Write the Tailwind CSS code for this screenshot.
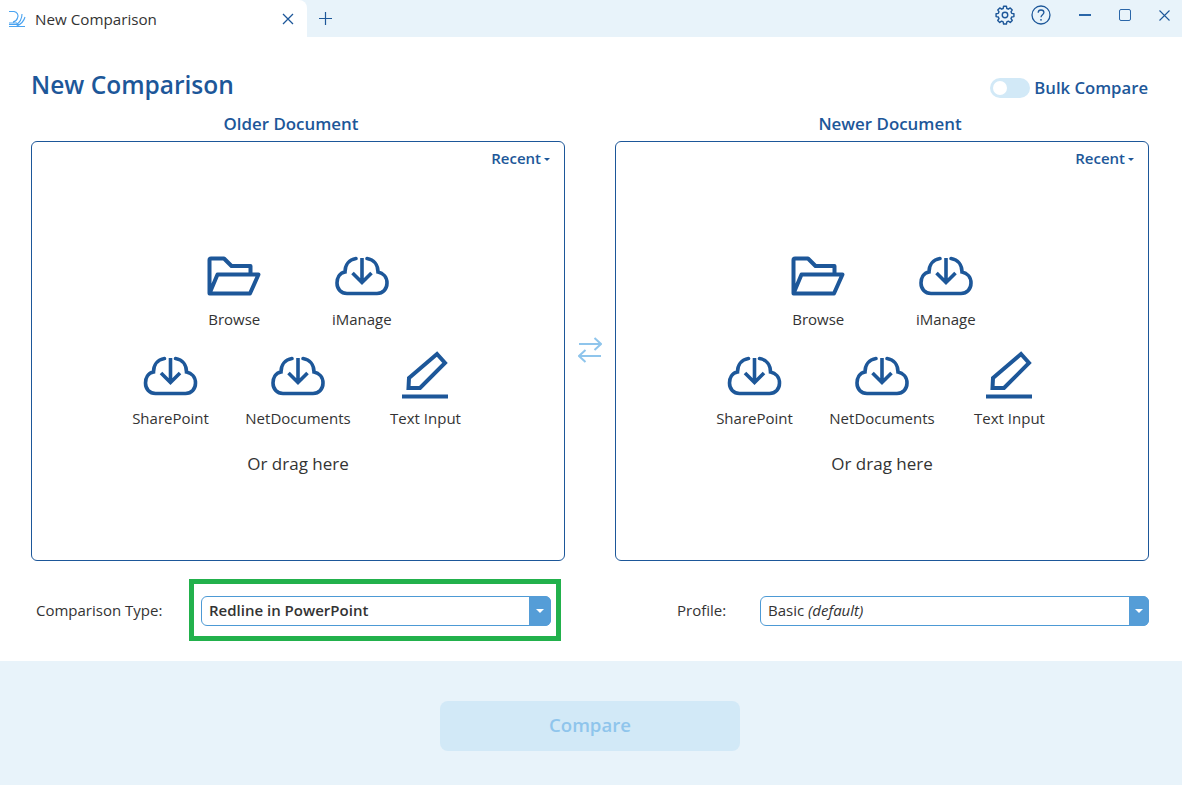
<!DOCTYPE html>
<html lang="en">
<head>
  <meta charset="UTF-8" />
  <title>New Comparison</title>
  <script src="https://cdn.jsdelivr.net/npm/@tailwindcss/browser@4"></script>
</head>
<body class="bg-white [font-family:'Open_Sans',sans-serif] text-[#333]">
  <svg class="hidden">
    <symbol id="folder" viewBox="0 0 54 40">
      <path d="M2.500 37V4a1.500 1.500 0 0 1 1.500-1.500H17L24.500 10H43.500V18M2.500 37.500L10.500 18.500H51.500L43 37.500Z" fill="none" stroke="currentColor" stroke-width="4" stroke-linejoin="round" />
    </symbol>
    <symbol id="cloud" viewBox="0 0 54 40">
      <path d="M21 2.500C14 3.500 10 9 10 16C4.500 17 2 22 2 27C2 33 6 37.500 12 37.500H42C48 37.500 52 33 52 27C52 21 48 17 43 16C43 9 39 3.500 32 2.500" fill="none" stroke="currentColor" stroke-width="3.600" stroke-linecap="round" />
      <path d="M27 2V26M17.500 17L27 26.500L36.500 17" fill="none" stroke="currentColor" stroke-width="3.600" />
    </symbol>
    <symbol id="pen" viewBox="0 0 50 48">
      <path d="M9 27L37 3L45 12L20 37H8.500Z" fill="none" stroke="currentColor" stroke-width="4" />
      <path d="M2 45.500H48" stroke="currentColor" stroke-width="4" />
    </symbol>
  </svg>

  <div class="flex h-[785px] w-[1182px] flex-col overflow-hidden">
    <!-- tab bar -->
    <div class="flex h-[37px] shrink-0 items-center bg-[#e8f3fa]">
      <div class="flex h-full w-[307px] items-center rounded-tr-lg bg-white pl-[8px] pr-[13px]">
        <svg class="mt-[1px] h-[18px] w-[18px]" viewBox="0 0 18 18" fill="none" stroke="#4aa3f0" stroke-width="1.100">
          <path d="M1 1.500H6C9 2 11 5 9.500 8C9 10 7 11.500 5 12M14 4C14 9 11 13 8 15M17 7C16 11 13 14 9 16M1 13H9M1 14.500H11M1 16.500H17" />
        </svg>
        <span class="ml-[9px] text-[15.200px] leading-5">New Comparison</span>
        <svg class="ml-auto h-[12px] w-[12px] text-[#1d5799]" viewBox="0 0 12 12" fill="none" stroke="currentColor" stroke-width="1.300"><path d="M1 1L11 11M11 1L1 11" /></svg>
      </div>
      <svg class="ml-[12px] h-[13px] w-[13px] text-[#1d5799]" viewBox="0 0 13 13" fill="none" stroke="currentColor" stroke-width="1.200"><path d="M6.500 0V13M0 6.500H13" /></svg>
      <div class="ml-auto mt-[-7px] flex items-center text-[#1d5799]">
        <svg class="h-[20px] w-[20px]" viewBox="0 0 24 24" fill="none" stroke="currentColor" stroke-width="1.700">
          <path d="M10.300 2.500h3.400l.5 2.700 1.800.8 2.300-1.500 2.400 2.400-1.500 2.300.8 1.800 2.700.5v3.400l-2.700.5-.8 1.800 1.500 2.300-2.400 2.400-2.300-1.500-1.800.8-.5 2.700h-3.400l-.5-2.700-1.800-.8-2.300 1.500-2.400-2.400 1.500-2.300-.8-1.800-2.700-.5v-3.400l2.700-.5.8-1.800-1.500-2.300 2.400-2.400 2.300 1.500 1.800-.8z" stroke-linejoin="round" transform="translate(0 -1)" />
          <circle cx="12" cy="12" r="3.300" />
        </svg>
        <svg class="ml-[16px] h-[20px] w-[20px]" viewBox="0 0 20 20" fill="none" stroke="currentColor" stroke-width="1.300">
          <circle cx="10" cy="10" r="9" />
          <path d="M7.200 7.800C7.200 6 8.500 5 10 5C11.700 5 12.900 6.100 12.900 7.600C12.900 9.700 10 9.800 10 12.200" />
          <circle cx="10" cy="14.800" r=".9" fill="currentColor" stroke="none" />
        </svg>
        <span class="ml-[28px] h-[2px] w-[12px] bg-[#2a66a8]"></span>
        <span class="ml-[28px] h-[12px] w-[12px] rounded-[2px] border-[1.500px] border-[#2a66a8]"></span>
        <svg class="ml-[28px] mr-[12px] h-[11px] w-[11px]" viewBox="0 0 11 11" fill="none" stroke="currentColor" stroke-width="1.100"><path d="M.5 .5L10.500 10.500M10.500 .5L.5 10.500" /></svg>
      </div>
    </div>

    <main class="flex-1 px-[31px]">
      <div class="flex h-[67px] items-center justify-between pr-[3px] pt-[29px]">
        <h1 class="mt-[-1px] text-[24.500px] font-semibold leading-[36px] text-[#1d5799]">New Comparison</h1>
        <div class="mt-[5px] flex items-center">
          <span class="flex h-[20px] w-[40px] items-center rounded-full bg-[#d2e9f7] pl-[3px]"><span class="h-[14px] w-[14px] rounded-full bg-white"></span></span>
          <span class="ml-[4px] text-[16.700px] font-semibold leading-6 text-[#1d5799]">Bulk Compare</span>
        </div>
      </div>

      <div class="flex h-[37px] items-center pt-[2px] text-[16.900px] font-semibold text-[#1d5799]">
        <div class="w-[534px] pr-[14px] text-center">Older Document</div>
        <div class="w-[50px]"></div>
        <div class="w-[534px] pl-[16px] text-center">Newer Document</div>
      </div>

      <div class="flex">
        <section class="h-[420px] w-[534px] rounded-md border border-[#1d5799] text-[15px]">
          <div class="flex items-center justify-end pr-[14px] pt-[5px] font-semibold leading-[22px] text-[#1d5799]">Recent<span class="ml-[3px] mt-[2px] h-0 w-0 border-x-[3px] border-t-[3px] border-x-transparent border-t-[#1d5799]"></span></div>
          <div class="mt-[83px] flex justify-center">
            <div class="flex w-[127.500px] flex-col items-center">
              <div class="flex h-[48px] items-center text-[#1d5799]"><svg class="h-[40px] w-[54px]"><use href="#folder" /></svg></div>
              <span class="mt-[9px] leading-5">Browse</span>
            </div>
            <div class="flex w-[127.500px] flex-col items-center">
              <div class="flex h-[48px] items-center text-[#1d5799]"><svg class="h-[40px] w-[54px]"><use href="#cloud" /></svg></div>
              <span class="mt-[9px] leading-5">iManage</span>
            </div>
          </div>
          <div class="mt-[22px] flex justify-center">
            <div class="flex w-[127.500px] flex-col items-center">
              <div class="flex h-[48px] items-center pt-[2px] text-[#1d5799]"><svg class="mr-[1px] h-[40px] w-[55px]"><use href="#cloud" /></svg></div>
              <span class="mt-[9px] leading-5">SharePoint</span>
            </div>
            <div class="flex w-[127.500px] flex-col items-center">
              <div class="flex h-[48px] items-center pt-[2px] text-[#1d5799]"><svg class="h-[40px] w-[54px]"><use href="#cloud" /></svg></div>
              <span class="mt-[9px] leading-5">NetDocuments</span>
            </div>
            <div class="flex w-[127.500px] flex-col items-center">
              <div class="flex h-[48px] items-center pr-[2px] text-[#1d5799]"><svg class="h-[48px] w-[50px]"><use href="#pen" /></svg></div>
              <span class="mt-[9px] leading-5">Text Input</span>
            </div>
          </div>
          <p class="mt-[24px] text-center text-[17px] leading-6">Or drag here</p>
        </section>

        <div class="flex w-[50px] items-center justify-center pb-[2px]">
          <svg class="h-[26px] w-[24px] text-[#8fc5ec]" viewBox="0 0 24 26" fill="none" stroke="currentColor" stroke-width="2"><path d="M1 7H23M16.500 1L23 7L16.500 13M23 19H1M7.500 13L1 19L7.500 25" /></svg>
        </div>

        <section class="h-[420px] w-[534px] rounded-md border border-[#1d5799] text-[15px]">
          <div class="flex items-center justify-end pr-[14px] pt-[5px] font-semibold leading-[22px] text-[#1d5799]">Recent<span class="ml-[3px] mt-[2px] h-0 w-0 border-x-[3px] border-t-[3px] border-x-transparent border-t-[#1d5799]"></span></div>
          <div class="mt-[83px] flex justify-center">
            <div class="flex w-[127.500px] flex-col items-center">
              <div class="flex h-[48px] items-center text-[#1d5799]"><svg class="h-[40px] w-[54px]"><use href="#folder" /></svg></div>
              <span class="mt-[9px] leading-5">Browse</span>
            </div>
            <div class="flex w-[127.500px] flex-col items-center">
              <div class="flex h-[48px] items-center text-[#1d5799]"><svg class="h-[40px] w-[54px]"><use href="#cloud" /></svg></div>
              <span class="mt-[9px] leading-5">iManage</span>
            </div>
          </div>
          <div class="mt-[22px] flex justify-center">
            <div class="flex w-[127.500px] flex-col items-center">
              <div class="flex h-[48px] items-center pt-[2px] text-[#1d5799]"><svg class="mr-[1px] h-[40px] w-[55px]"><use href="#cloud" /></svg></div>
              <span class="mt-[9px] leading-5">SharePoint</span>
            </div>
            <div class="flex w-[127.500px] flex-col items-center">
              <div class="flex h-[48px] items-center pt-[2px] text-[#1d5799]"><svg class="h-[40px] w-[54px]"><use href="#cloud" /></svg></div>
              <span class="mt-[9px] leading-5">NetDocuments</span>
            </div>
            <div class="flex w-[127.500px] flex-col items-center">
              <div class="flex h-[48px] items-center pr-[2px] text-[#1d5799]"><svg class="h-[48px] w-[50px]"><use href="#pen" /></svg></div>
              <span class="mt-[9px] leading-5">Text Input</span>
            </div>
          </div>
          <p class="mt-[24px] text-center text-[17px] leading-6">Or drag here</p>
        </section>
      </div>

      <div class="flex h-[100px] items-center text-[15px]">
        <span class="mb-[2px] ml-[5px] w-[165px]">Comparison Type:</span>
        <div class="relative flex h-[30px] w-[350px] items-center rounded-md border border-[#4d9ad5] pb-[2px] pl-[7px] font-semibold">
          Redline in PowerPoint
          <span class="absolute inset-y-[-1px] right-[-1px] flex w-[22px] items-center justify-center rounded-r-md bg-[#559dd7]"><span class="h-0 w-0 border-x-[4px] border-t-[4px] border-x-transparent border-t-white"></span></span>
          <span class="absolute bottom-[-16px] left-[-13px] right-[-11px] top-[-18px] border-[5px] border-[#22b14c]"></span>
        </div>
        <span class="mb-[2px] ml-[126px] w-[83px]">Profile:</span>
        <div class="relative flex h-[30px] w-[389px] items-center rounded-md border border-[#4d9ad5] pb-[2px] pl-[7px]">
          <span>Basic <i>(default)</i></span>
          <span class="absolute inset-y-[-1px] right-[-1px] flex w-[20px] items-center justify-center rounded-r-md bg-[#559dd7]"><span class="h-0 w-0 border-x-[4px] border-t-[4px] border-x-transparent border-t-white"></span></span>
        </div>
      </div>
    </main>

    <footer class="flex h-[124px] shrink-0 justify-center bg-[#e8f3fa] pr-[2px] pt-[40px]">
      <button class="h-[50px] w-[300px] rounded-lg bg-[#d2e9f7] pb-[2px] text-[18.600px] font-semibold text-[#8fc5ec]">Compare</button>
    </footer>
  </div>
</body>
</html>
